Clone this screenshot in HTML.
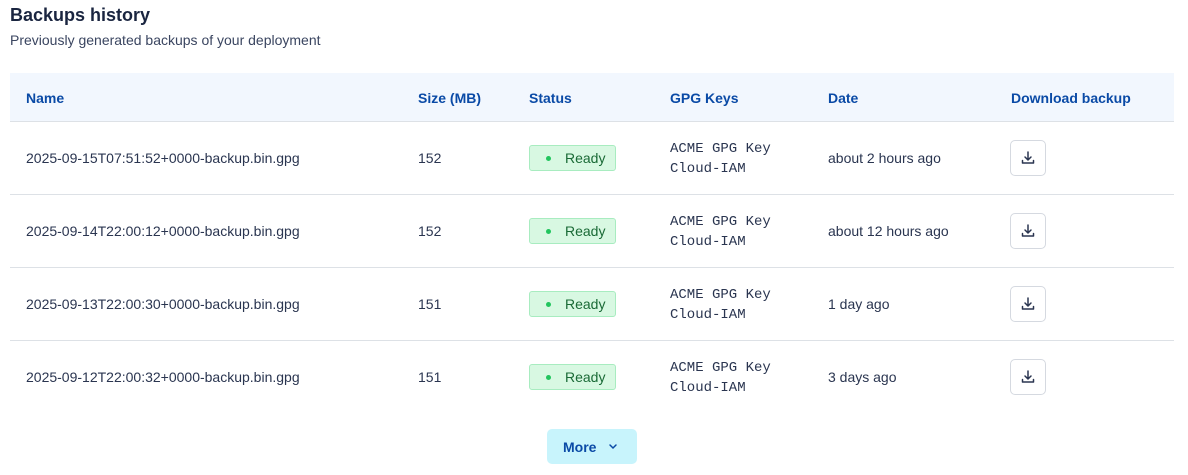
<!DOCTYPE html>
<html><head><style>
body{margin:0;background:#fff;font-family:"Liberation Sans",sans-serif;color:#1e2a44;width:1188px;height:475px;overflow:hidden;position:relative}
h1{position:absolute;left:10px;top:5px;margin:0;font-size:18px;font-weight:600;color:#1a2540}
.sub{position:absolute;left:10px;top:32px;font-size:14px;color:#3a4560}
.hdr{position:absolute;left:10px;top:73px;width:1164px;height:48px;background:#f2f7fe;border-bottom:1px solid #dde1e6}
.hdr span{position:absolute;top:17px;font-size:14px;font-weight:600;color:#0a4aa6}
.row{position:absolute;left:10px;width:1164px;height:72px;border-bottom:1px solid #dde1e6;font-size:14px;color:#2a3550}
.row>span{position:absolute;top:28px}
.badge{position:absolute;left:519px;top:23px;width:85px;height:24px;background:#d8f8e2;border:1px solid #a8ecc0;border-radius:3px;color:#1a6a36;font-size:14px}
.badge i{position:absolute;left:16px;top:10px;width:5px;height:5px;border-radius:50%;background:#22c55e}
.badge b{position:absolute;left:35px;top:4px;font-weight:normal}
.gpg{position:absolute;left:660px;top:17px;font-family:"Liberation Mono",monospace;font-size:14px;line-height:20px;color:#2a3550}
.dl{position:absolute;left:1000px;top:18px;width:34px;height:34px;border:1px solid #d5d9e0;border-radius:5px;background:#fff}
.dl svg{position:absolute;left:9px;top:9px}
.more{position:absolute;left:547px;top:429px;width:90px;height:35px;background:#c8f4fc;border-radius:5px;color:#0a4aa6;font-size:14px;font-weight:600}
</style></head><body>
<h1>Backups history</h1>
<div class="sub">Previously generated backups of your deployment</div>
<div class="hdr"><span style="left:16px">Name</span><span style="left:408px">Size (MB)</span><span style="left:519px">Status</span><span style="left:660px">GPG Keys</span><span style="left:818px">Date</span><span style="left:1001px">Download backup</span></div>
<!--rows-->
<div class="row" style="top:122px"><span style="left:16px">2025-09-15T07:51:52+0000-backup.bin.gpg</span><span style="left:408px">152</span><div class="badge"><i></i><b>Ready</b></div><div class="gpg">ACME GPG Key<br>Cloud-IAM</div><span style="left:818px">about 2 hours ago</span><div class="dl"><svg width="16" height="16" viewBox="0 0 16 16" fill="none" stroke="#2a3550" stroke-width="1.5" stroke-linecap="round" stroke-linejoin="round"><path d="M8 2v8M5 7l3 3 3-3M2.5 10.5v2.5h11v-2.5"/></svg></div></div>
<div class="row" style="top:195px"><span style="left:16px">2025-09-14T22:00:12+0000-backup.bin.gpg</span><span style="left:408px">152</span><div class="badge"><i></i><b>Ready</b></div><div class="gpg">ACME GPG Key<br>Cloud-IAM</div><span style="left:818px">about 12 hours ago</span><div class="dl"><svg width="16" height="16" viewBox="0 0 16 16" fill="none" stroke="#2a3550" stroke-width="1.5" stroke-linecap="round" stroke-linejoin="round"><path d="M8 2v8M5 7l3 3 3-3M2.5 10.5v2.5h11v-2.5"/></svg></div></div>
<div class="row" style="top:268px"><span style="left:16px">2025-09-13T22:00:30+0000-backup.bin.gpg</span><span style="left:408px">151</span><div class="badge"><i></i><b>Ready</b></div><div class="gpg">ACME GPG Key<br>Cloud-IAM</div><span style="left:818px">1 day ago</span><div class="dl"><svg width="16" height="16" viewBox="0 0 16 16" fill="none" stroke="#2a3550" stroke-width="1.5" stroke-linecap="round" stroke-linejoin="round"><path d="M8 2v8M5 7l3 3 3-3M2.5 10.5v2.5h11v-2.5"/></svg></div></div>
<div class="row" style="top:341px;border-bottom:none"><span style="left:16px">2025-09-12T22:00:32+0000-backup.bin.gpg</span><span style="left:408px">151</span><div class="badge"><i></i><b>Ready</b></div><div class="gpg">ACME GPG Key<br>Cloud-IAM</div><span style="left:818px">3 days ago</span><div class="dl"><svg width="16" height="16" viewBox="0 0 16 16" fill="none" stroke="#2a3550" stroke-width="1.5" stroke-linecap="round" stroke-linejoin="round"><path d="M8 2v8M5 7l3 3 3-3M2.5 10.5v2.5h11v-2.5"/></svg></div></div>
<div class="more"><span style="position:absolute;left:16px;top:10px">More</span><svg style="position:absolute;left:61px;top:14px" width="10" height="7" viewBox="0 0 10 7" fill="none" stroke="#0a4aa6" stroke-width="1.5" stroke-linecap="round"><path d="M2 2l3 3 3-3"/></svg></div>
</body></html>
